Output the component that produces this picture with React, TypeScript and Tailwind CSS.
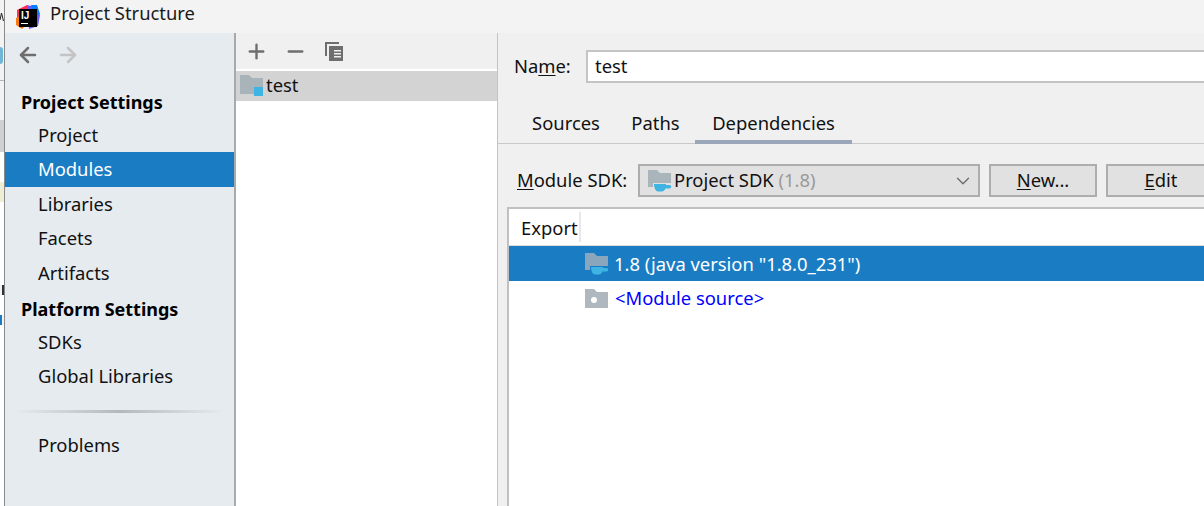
import React from 'react';
import { Plus, Minus, ArrowLeft, ArrowRight, ChevronDown } from 'lucide-react';

const font = { fontFamily: '"Noto Sans", "Open Sans", sans-serif' };

const FolderShape = ({ color }: { color: string }) => (
  <path d="M0 0h9l3 3h11v16H0z" fill={color} />
);

const ModuleIcon = () => (
  <svg width="24" height="22" viewBox="0 0 24 22" className="shrink-0">
    <FolderShape color="#a9b3ba" />
    <rect x="14" y="12" width="9" height="9" fill="#3fb4e3" />
  </svg>
);

const SdkIcon = ({ color }: { color: string }) => (
  <svg width="24" height="22" viewBox="0 0 24 22" className="shrink-0">
    <path d="M0 0h9l3 3h11v10H5v4H0z" fill={color} />
    <path d="M6 14h12v1h3.500a1.750 1.750 0 0 1 0 3.500H17.500c-.8 1.600-2 3-3.500 3h-4c-2 0-4-3-4-7.500z" fill="#3fb4e3" />
  </svg>
);

const SourceIcon = () => (
  <svg width="24" height="20" viewBox="0 0 24 20" className="shrink-0">
    <FolderShape color="#aeb8be" />
    <circle cx="9" cy="11" r="3" fill="#ffffff" />
  </svg>
);

const IdeaLogo = () => (
  <svg width="26" height="26" viewBox="0 0 26 26" className="shrink-0">
    <path d="M2 6l10-5 4 8-8 8-6-2z" fill="#fe315d" />
    <path d="M12 1l8 2 5 8-2 11-9 3z" fill="#6b57ff" />
    <path d="M1 14l6-3 5 9-5 5-6-4z" fill="#f97a12" />
    <path d="M16 1h6l3 9-6 3z" fill="#087cfa" />
    <rect x="4" y="5" width="18" height="18" fill="#000000" />
    <rect x="6" y="19" width="7" height="1" fill="#ffffff" />
    <text x="6" y="15" fontSize="10" fontWeight="700" fill="#ffffff" style={{ fontFamily: '"Liberation Sans", sans-serif' }}>IJ</text>
  </svg>
);

const CopyIcon = () => (
  <svg width="20" height="21" viewBox="0 0 20 21">
    <path d="M1 1h14v2H3v12H1z" fill="#6e6e6e" />
    <path d="M5 5h14v15H5z" fill="#6e6e6e" />
    <path d="M10 9h7v1.500h-7zM10 12h7v1.500h-7zM10 15h7v1.500h-7z" fill="#f0f0f0" />
  </svg>
);

const navItem = 'h-[34.4px] pl-[33px] pb-[1px] flex items-center text-[18.4px] text-[#111]';
const navHead = 'pl-[16px] flex items-center text-[18px] font-bold text-black';
const label = 'text-[18.4px] text-[#111] whitespace-nowrap';

export default function App() {
  return (
    <div className="w-[1204px] h-[506px] flex overflow-hidden bg-[#f0f0f0]" style={font}>
      {/* desktop peeking out behind the dialog */}
      <div className="w-[5px] shrink-0 flex flex-col bg-[#f3f3f3] border-r border-[#8a8a8a] overflow-hidden">
        <div className="h-[47px] pt-[12px]">
          <svg width="4" height="10" viewBox="0 0 4 10" className="block">
            <path d="M0 8L1.500 1L3.500 9" fill="none" stroke="#222" strokeWidth="1" />
          </svg>
        </div>
        <div className="h-[17px] w-[3px] rounded-r-full bg-[#6fb7d8]" />
        <div className="h-[16px]" />
        <div className="h-px bg-[#b5b5b5]" />
        <div className="h-[39px]" />
        <div className="h-[32px] bg-[#d0d0d0]" />
        <div className="h-[30px] bg-white" />
        <div className="h-[20px] bg-[#eeeed6]" />
        <div className="h-[83px] bg-white" />
        <div className="h-[10px] w-[2px] ml-[2px] bg-[#333]" />
        <div className="h-[20px] bg-white" />
        <div className="h-[10px] w-[2px] bg-[#1a7dc4]" />
        <div className="flex-1 bg-white" />
      </div>

      <div className="flex-1 min-w-0 flex flex-col">
        <div className="h-[33px] shrink-0 flex items-center pl-[10px] gap-[9px] bg-[#f3f3f3]">
          <IdeaLogo />
          <span className="text-[18.4px] text-[#1a1a1a] pb-[7px]">Project Structure</span>
        </div>

        <div className="flex-1 min-h-0 flex">
          <aside className="w-[231px] shrink-0 bg-[#e6ebf0] border-r-2 border-[#a9a9a9] flex flex-col">
            <div className="h-[44px] flex items-center pl-[11px] gap-[16px]">
              <ArrowLeft size={24} strokeWidth={2.5} className="text-[#6e6e6e]" />
              <ArrowRight size={24} strokeWidth={2.5} className="text-[#c4c4c4]" />
            </div>
            <div className="h-[8px]" />
            <div className={`${navHead} h-[33px] pt-[1px]`}>Project Settings</div>
            <div className={navItem}>Project</div>
            <div className={`${navItem} bg-[#1a7dc4] !text-white`}>Modules</div>
            <div className={navItem}>Libraries</div>
            <div className={navItem}>Facets</div>
            <div className={`${navItem} !pb-0`}>Artifacts</div>
            <div className={`${navHead} h-[35px] pt-[4px]`}>Platform Settings</div>
            <div className={navItem}>SDKs</div>
            <div className={navItem}>Global Libraries</div>
            <div className="h-[16px]" />
            <div className="h-[3px] mx-[10px] bg-gradient-to-r from-transparent via-[#b5b8bb] to-transparent" />
            <div className="h-[15px]" />
            <div className={navItem}>Problems</div>
          </aside>

          <section className="w-[262px] shrink-0 flex flex-col bg-white border-r border-[#c4c4c4]">
            <div className="h-[36px] bg-[#f0f0f0] flex items-center pl-[9px] gap-[16px]">
              <Plus size={23} strokeWidth={2.5} className="text-[#6e6e6e]" />
              <Minus size={23} strokeWidth={2.5} className="text-[#6e6e6e]" />
              <div className="ml-[1px]">
                <CopyIcon />
              </div>
            </div>
            <div className="h-[30px] mt-[2px] bg-[#d3d3d3] flex items-center pl-[4px] gap-[2px] text-[18.4px] text-[#111]">
              <ModuleIcon />
              <span className="pb-[2px]">test</span>
            </div>
          </section>

          <main className="flex-1 min-w-0 flex flex-col">
            <div className="h-[66px] flex items-center pl-[16px]">
              <span className={`w-[72px] shrink-0 pb-[1px] ${label}`}>Na<span className="underline underline-offset-2">m</span>e:</span>
              <div className="flex-1 h-[33px] bg-white border-2 border-r-0 border-[#c4c4c4] flex items-center pl-[7px] pb-[1px] text-[18.4px] text-[#111]">test</div>
            </div>
            <div className="h-[45px] flex items-end pl-[18px] border-b border-[#c8c8c8]">
              <div className={`w-[100px] h-[34px] text-center ${label}`}>Sources</div>
              <div className={`w-[79px] h-[34px] text-center ${label}`}>Paths</div>
              <div className={`w-[157px] h-[35px] -mb-px text-center border-b-4 border-[#9aa7ba] ${label}`}>Dependencies</div>
            </div>
            <div className="h-[63px] flex items-start pl-[19px] pt-[20px] overflow-hidden">
              <span className={`w-[121px] h-[33px] shrink-0 flex items-center pb-[1px] ${label}`}><span><span className="underline underline-offset-2">M</span>odule SDK:</span></span>
              <div className="w-[342px] h-[33px] shrink-0 bg-[#e1e1e1] border-2 border-[#adadad] flex items-center pl-[8px] gap-[2px] text-[18.4px] text-[#111] whitespace-nowrap">
                <SdkIcon color="#aab4bb" />
                <span className="pb-[1px]">Project SDK <span className="text-[#9a9a9a]">(1.8)</span></span>
                <ChevronDown size={22} strokeWidth={1.5} className="ml-auto mr-[4px] text-[#6e6e6e]" />
              </div>
              <button className={`w-[108px] h-[33px] ml-[9px] shrink-0 bg-[#e1e1e1] border-2 border-[#adadad] pb-[1px] ${label}`}><span className="underline underline-offset-2">N</span>ew...</button>
              <button className={`w-[110px] h-[33px] ml-[9px] shrink-0 bg-[#e1e1e1] border-2 border-[#adadad] pb-[1px] ${label}`}><span className="underline underline-offset-2">E</span>dit</button>
            </div>
            <div className="flex-1 min-h-0 ml-[9px] bg-white border-l-2 border-t-2 border-[#c0c0c0] flex flex-col">
              <div className="h-[37px] shrink-0 flex items-stretch border-b border-[#dcdcdc]">
                <span className={`w-[72px] pl-[12px] pt-[2px] border-r-2 border-[#e8e8e8] my-[3px] flex items-center ${label}`}>Export</span>
              </div>
              <div className="h-[35px] shrink-0 bg-[#1a7dc4] flex items-center pl-[76px] gap-[5px] text-[18.4px] text-white">
                <SdkIcon color="#8aa6bd" />
                <span>1.8 (java version "1.8.0_231")</span>
              </div>
              <div className="h-[35px] shrink-0 flex items-center pl-[76px] gap-[6px] text-[18.4px] text-[#0000ff]">
                <SourceIcon />
                <span className="pb-[2px]">&lt;Module source&gt;</span>
              </div>
            </div>
          </main>
        </div>
      </div>
    </div>
  );
}
